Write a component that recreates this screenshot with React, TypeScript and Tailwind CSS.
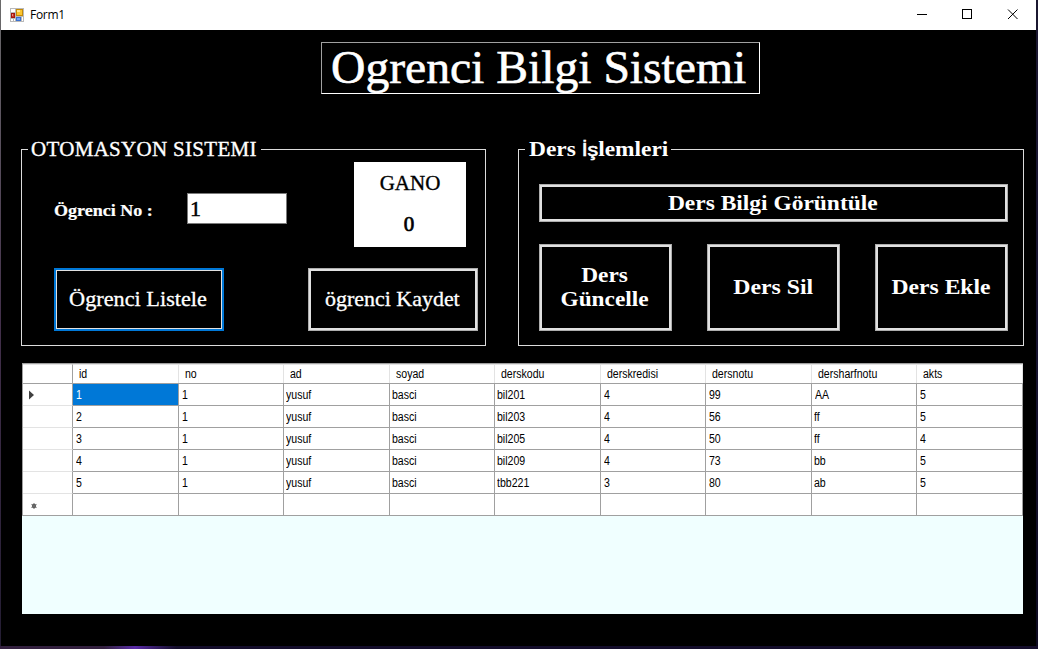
import type { ReactNode } from 'react';

const columns = ['id', 'no', 'ad', 'soyad', 'derskodu', 'derskredisi', 'dersnotu', 'dersharfnotu', 'akts'];

const rows = [
  ['1', '1', 'yusuf', 'basci', 'bil201', '4', '99', 'AA', '5'],
  ['2', '1', 'yusuf', 'basci', 'bil203', '4', '56', 'ff', '5'],
  ['3', '1', 'yusuf', 'basci', 'bil205', '4', '50', 'ff', '4'],
  ['4', '1', 'yusuf', 'basci', 'bil209', '4', '73', 'bb', '5'],
  ['5', '1', 'yusuf', 'basci', 'tbb221', '3', '80', 'ab', '5'],
  ['', '', '', '', '', '', '', '', ''],
];

const gridColumns = 'grid grid-cols-[50px_106px_105px_106px_105px_106px_105px_106px_105px_106px]';

function FormIcon() {
  return (
    <svg width="14" height="14" viewBox="0 0 14 14" shapeRendering="crispEdges" className="ml-px">
      <rect width="14" height="14" fill="#b9b9b9" />
      <rect x="1" y="1" width="4" height="3" fill="#fff" />
      <rect x="1" y="11" width="2" height="2" fill="#fff" />
      <rect x="4" y="11" width="1" height="2" fill="#fff" />
      <rect x="12" y="9" width="1" height="4" fill="#fff" />
      <rect x="1" y="5" width="4" height="5" fill="#a3170f" />
      <rect x="2" y="6" width="2" height="3" fill="#c8362a" />
      <rect x="2" y="6" width="1" height="2" fill="#ee8a7c" />
      <rect x="6" y="1" width="7" height="7" fill="#c48a08" />
      <rect x="7" y="2" width="5" height="5" fill="#fbc52f" />
      <rect x="7" y="2" width="3" height="2" fill="#ffe68c" />
      <rect x="6" y="9" width="5" height="4" fill="#3a70d0" />
      <rect x="7" y="10" width="3" height="2" fill="#75a4f2" />
    </svg>
  );
}

function TitleBar() {
  return (
    <header className="flex h-[30px] items-center bg-white pl-[8px] text-black">
      <FormIcon />
      <span className="ml-[6px] font-['Open_Sans',sans-serif] text-[12px] tracking-[-0.3px]">Form1</span>
      <div className="ml-auto flex h-full">
        <svg width="138" height="30" viewBox="0 0 138 30" fill="none" stroke="#000">
          <path d="M19 14.5h10" />
          <rect x="64.5" y="9.5" width="9" height="9" />
          <path d="M110 9.5l9.5 9.5M119.5 9.5L110 19" />
        </svg>
      </div>
    </header>
  );
}

function GroupBox({ title, className, children }: { title: ReactNode; className: string; children: ReactNode }) {
  return (
    <section className={`h-[197px] border border-[#dcdcdc] ${className}`}>
      <h2 className="-mt-[13px] ml-[6px] h-[25px] w-fit bg-black pr-[4px] pl-[3px] text-[21px] leading-[25px]">{title}</h2>
      {children}
    </section>
  );
}

function FormButton({ className, children }: { className: string; children: ReactNode }) {
  return (
    <button className={`flex items-center justify-center border border-[#adadad] bg-black text-[21px] leading-[24px] text-white ${className}`}>
      <span className="flex h-full w-full items-center justify-center border-2 border-[#e1e1e1] pb-px">{children}</span>
    </button>
  );
}

function StudentPanel() {
  return (
    <GroupBox
      className="w-[465px]"
      title={<span className="tracking-[0.3px] [-webkit-text-stroke:0.35px]">OTOMASYON SISTEMI</span>}
    >
      <div className="flex h-[85px] items-start pl-[32px]">
        <label className="mt-[37px] w-[133px] origin-left scale-x-[1.06] text-[17px] leading-[24px] font-bold [-webkit-text-stroke:0.2px]">
          Ögrenci No :
        </label>
        <input
          defaultValue="1"
          className="mt-[31px] h-[31px] w-[100px] border border-[#7a7a7a] bg-white pl-[2px] text-[22px] text-black outline-none [-webkit-text-stroke:0.5px]"
        />
        <div className="ml-[67px] flex h-[85px] w-[112px] flex-col items-center bg-white pt-[9px] text-[21px] leading-[24px] text-black [-webkit-text-stroke:0.35px]">
          <span>GANO</span>
          <span className="mt-[17px] pr-[2px] [-webkit-text-stroke:0.7px]">0</span>
        </div>
      </div>
      <div className="mt-[21px] flex justify-between pr-[7px] pl-[32px]">
        <button className="h-[63px] w-[170px] border-2 border-[#0078d7] bg-black text-[21px] leading-[24px]">
          <span className="flex h-full w-full items-center justify-center border border-[#e1e1e1] pr-[2px] pb-[2px] [-webkit-text-stroke:0.3px]">
            <span className="scale-x-[1.06]">Ögrenci Listele</span>
          </span>
        </button>
        <FormButton className="h-[63px] w-[170px]">
          <span className="scale-x-[1.045] pr-[2px] pb-px [-webkit-text-stroke:0.3px]">ögrenci Kaydet</span>
        </FormButton>
      </div>
    </GroupBox>
  );
}

function CoursePanel() {
  return (
    <GroupBox
      className="ml-[32px] w-[506px] font-bold"
      title={
        <span className="block w-[139px] origin-left translate-x-px scale-x-[1.115] whitespace-nowrap">
          Ders <span className="font-['Liberation_Sans',sans-serif] text-[19px] font-normal [-webkit-text-stroke:0.6px]">İş</span>
          lemleri
        </span>
      }
    >
      <div className="mt-[22px] flex flex-col gap-[22px] pr-[15px] pl-[20px]">
        <FormButton className="h-[38px] w-full font-bold">
          <span className="scale-x-[1.117] pt-px pr-[2px]">Ders Bilgi Görüntüle</span>
        </FormButton>
        <div className="flex justify-between">
          <FormButton className="h-[87px] w-[133px] font-bold">
            <span className="scale-x-[1.11] pr-[2px] pb-px">
              Ders
              <br />
              Güncelle
            </span>
          </FormButton>
          <FormButton className="h-[87px] w-[133px] font-bold">
            <span className="scale-x-[1.133] pr-px pb-px">Ders Sil</span>
          </FormButton>
          <FormButton className="h-[87px] w-[133px] font-bold">
            <span className="scale-x-[1.124] pb-px">Ders Ekle</span>
          </FormButton>
        </div>
      </div>
    </GroupBox>
  );
}

function RowMarker({ index }: { index: number }) {
  if (index === 0) {
    return (
      <svg width="5" height="10" viewBox="0 0 5 10" className="mt-px ml-[6px]">
        <path d="M0 0.5L5 5L0 9.5Z" fill="#404040" />
      </svg>
    );
  }
  if (index === rows.length - 1) {
    return (
      <svg width="6" height="6" viewBox="0 0 6 6" className="mt-[3px] ml-[8px]">
        <circle cx="3" cy="3" r="2.2" fill="#505050" />
        <path d="M3 0v6M0.4 1.4l5.2 3.2M5.6 1.4L0.4 4.6" stroke="#707070" strokeWidth="0.9" />
      </svg>
    );
  }
  return null;
}

function DataGrid() {
  return (
    <div className="mt-[17px] ml-[21px] h-[251px] w-[1001px] bg-[#f0ffff] font-['Liberation_Sans',sans-serif] text-[12px] text-black">
      <div className="border-t border-l border-[#a0a0a0] bg-white">
        <div className={`${gridColumns} h-[20px] border-b border-[#a0a0a0]`}>
          <div className="border-t border-r border-t-[#e3e3e3] border-r-[#a0a0a0]" />
          {columns.map((name) => (
            <div key={name} className="flex items-center border-t border-r border-[#e3e3e3] pl-[6px]">
              <span className="origin-left scale-x-[0.88]">{name}</span>
            </div>
          ))}
        </div>
        {rows.map((row, r) => (
          <div key={r} className={`${gridColumns} h-[22px]`}>
            <div
              className={`flex items-center border-r border-b border-r-[#a0a0a0] ${
                r === rows.length - 1 ? 'border-b-[#a0a0a0]' : 'border-b-[#e3e3e3]'
              }`}
            >
              <RowMarker index={r} />
            </div>
            {row.map((value, c) => (
              <div
                key={c}
                className={`flex items-center border-r border-b border-[#a0a0a0] ${
                  /^[a-z]/.test(value) ? 'pl-[2px]' : 'pl-[3px]'
                } ${r === 0 && c === 0 ? 'bg-[#0078d7] text-white' : ''}`}
              >
                <span className="origin-left scale-x-[0.88]">{value}</span>
              </div>
            ))}
          </div>
        ))}
      </div>
    </div>
  );
}

export default function App() {
  return (
    <div className="flex h-[649px] w-[1038px] flex-col bg-[#17102b] font-['Liberation_Serif',serif] text-white">
      <div className="flex h-[646px]">
        <div className="w-px bg-linear-to-b from-[#6b6b6b] via-[#43304b] to-[#241d33]" />
        <main className="w-[1035px] bg-black">
          <TitleBar />
          <h1 className="mt-[12px] ml-[320px] h-[52px] w-[439px] border border-t-[#a0a0a0] border-r-white border-b-white border-l-[#a0a0a0] pl-[9px] text-[46px] leading-[50px] whitespace-nowrap [-webkit-text-stroke:0.6px]">
            <span className="inline-block origin-left scale-x-[1.035]">Ogrenci Bilgi Sistemi</span>
          </h1>
          <div className="mt-[55px] ml-[20px] flex">
            <StudentPanel />
            <CoursePanel />
          </div>
          <DataGrid />
        </main>
        <div className="w-[2px] bg-linear-to-b from-[#1b1730] via-[#171431] to-[#0d0a20]" />
      </div>
      <div className="h-[3px] bg-linear-to-r from-[#33203f] from-10% via-[#5a2aa8] via-13% to-[#140d2b] to-17%" />
    </div>
  );
}
